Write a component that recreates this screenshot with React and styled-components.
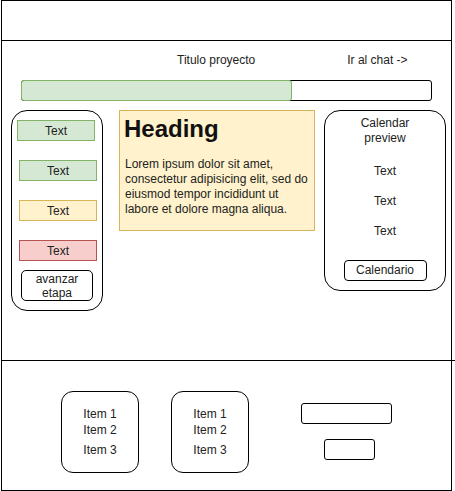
import React from "react";
import styled, { createGlobalStyle } from "styled-components";

const GlobalStyle = createGlobalStyle`
  html, body {
    margin: 0;
    padding: 0;
    background: #fff;
  }
  body {
    font-family: "Liberation Sans", Arial, Helvetica, sans-serif;
    font-size: 12px;
    color: #222;
  }
`;

const Frame = styled.div`
  width: 451px;
  height: 491px;
  margin-left: 1px;
  border: 1px solid #000;
  box-sizing: border-box;
  display: flex;
  flex-direction: column;
`;

const Header = styled.header`
  height: 40px;
  flex: none;
  box-sizing: border-box;
  border-bottom: 1px solid #000;
`;

const Main = styled.main`
  height: 320px;
  flex: none;
  box-sizing: border-box;
  padding: 0 9px;
  display: flex;
  flex-direction: column;
`;

const Divider = styled.div`
  height: 1px;
  flex: none;
  background: #000;
  margin-right: -5px;
  margin-top: -1px;
`;

const TopRow = styled.div`
  height: 39px;
  display: flex;
  align-items: center;
  line-height: 15px;
`;

const ProjectTitle = styled.span`
  margin-left: 166px;
`;

const ChatLink = styled.span`
  margin-left: 92px;
`;

const Progress = styled.div`
  margin: 0 10px;
  height: 21px;
  box-sizing: border-box;
  border: 1px solid #000;
  border-radius: 3px;
  display: flex;
`;

const ProgressFill = styled.div`
  margin: -1px;
  height: 21px;
  width: ${p => p.$width}px;
  box-sizing: border-box;
  background: #d5e8d4;
  border: 1px solid #82b366;
  border-radius: 3px;
`;

const PanelsRow = styled.div`
  margin-top: 9px;
  display: flex;
  align-items: flex-start;
  & > * {
    flex: none;
  }
`;

const SidePanel = styled.div`
  width: 92px;
  height: 201px;
  box-sizing: border-box;
  border: 1px solid #000;
  border-radius: 16px;
  padding-top: 9px;
  display: flex;
  flex-direction: column;
  align-items: flex-start;
`;

const palette = {
  green: ["#d5e8d4", "#82b366"],
  yellow: ["#fff2cc", "#d6b656"],
  red: ["#f8cecc", "#b85450"],
};

const StageBox = styled.div`
  width: 78px;
  height: 21px;
  box-sizing: border-box;
  margin-left: ${p => p.$offset}px;
  margin-bottom: 19px;
  background: ${p => palette[p.$tone][0]};
  border: 1px solid ${p => palette[p.$tone][1]};
  display: flex;
  align-items: center;
  justify-content: center;
  padding-top: 1px;
  line-height: 15px;
`;

const AdvanceButton = styled.div`
  width: 72px;
  height: 31px;
  box-sizing: border-box;
  margin-top: -10px;
  margin-left: 9px;
  border: 1px solid #000;
  border-radius: 5px;
  display: flex;
  align-items: center;
  justify-content: center;
  text-align: center;
  line-height: 14px;
`;

const NoteCard = styled.div`
  width: 196px;
  height: 121px;
  margin-left: 16px;
  box-sizing: border-box;
  background: #fff2cc;
  border: 1px solid #d6b656;
  padding: 4px 4px 0;
`;

const Heading = styled.h1`
  margin: 0;
  font-size: 24px;
  font-weight: bold;
  line-height: 28px;
  color: #111;
`;

const Paragraph = styled.p`
  margin: 14px 0 0 1px;
  font-size: 12px;
  line-height: 15px;
`;

const CalendarPanel = styled.div`
  width: 122px;
  height: 181px;
  margin-left: 9px;
  box-sizing: border-box;
  border: 1px solid #000;
  border-radius: 16px;
  padding-top: 5px;
  display: flex;
  flex-direction: column;
  align-items: center;
  text-align: center;
  line-height: 15px;
`;

const CalendarList = styled.div`
  margin-top: 18px;
  display: flex;
  flex-direction: column;
  gap: 15px;
`;

const CalendarButton = styled.div`
  margin-top: 21px;
  width: 83px;
  height: 21px;
  box-sizing: border-box;
  border: 1px solid #000;
  border-radius: 4px;
  display: flex;
  align-items: center;
  justify-content: center;
`;

const Footer = styled.footer`
  flex: 1;
  padding: 30px 0 0 59px;
  display: flex;
  align-items: flex-start;
`;

const ItemCard = styled.div`
  width: 78px;
  height: 82px;
  flex: none;
  box-sizing: border-box;
  margin-right: ${p => p.$gap}px;
  border: 1px solid #000;
  border-radius: 12px;
  padding-top: 14px;
  display: flex;
  flex-direction: column;
  align-items: center;
  line-height: 16px;
`;

const Item = styled.span`
  margin-top: ${p => (p.$spaced ? 4 : 0)}px;
`;

const InputStack = styled.div`
  padding-top: 12px;
  display: flex;
  flex-direction: column;
  align-items: flex-start;
  gap: 15px;
`;

const InputBox = styled.div`
  width: ${p => p.$width}px;
  height: 21px;
  box-sizing: border-box;
  margin-left: ${p => p.$offset || 0}px;
  border: 1px solid #000;
  border-radius: 3px;
`;

const stages = [
  { tone: "green", offset: 5 },
  { tone: "green", offset: 7 },
  { tone: "yellow", offset: 7 },
  { tone: "red", offset: 7 },
];

const ItemList = ({ gap }) => (
  <ItemCard $gap={gap}>
    <Item>Item 1</Item>
    <Item>Item 2</Item>
    <Item $spaced>Item 3</Item>
  </ItemCard>
);

export default function App() {
  return (
    <>
      <GlobalStyle />
      <Frame>
        <Header />
        <Main>
          <TopRow>
            <ProjectTitle>Titulo proyecto</ProjectTitle>
            <ChatLink>Ir al chat -&gt;</ChatLink>
          </TopRow>
          <Progress>
            <ProgressFill $width={271} />
          </Progress>
          <PanelsRow>
            <SidePanel>
              {stages.map((s, i) => (
                <StageBox key={i} $tone={s.tone} $offset={s.offset}>
                  Text
                </StageBox>
              ))}
              <AdvanceButton>
                avanzar
                <br />
                etapa
              </AdvanceButton>
            </SidePanel>
            <NoteCard>
              <Heading>Heading</Heading>
              <Paragraph>
                Lorem ipsum dolor sit amet,
                <br />
                consectetur adipisicing elit, sed do
                <br />
                eiusmod tempor incididunt ut
                <br />
                labore et dolore magna aliqua.
              </Paragraph>
            </NoteCard>
            <CalendarPanel>
              <div>
                Calendar
                <br />
                preview
              </div>
              <CalendarList>
                <span>Text</span>
                <span>Text</span>
                <span>Text</span>
              </CalendarList>
              <CalendarButton>Calendario</CalendarButton>
            </CalendarPanel>
          </PanelsRow>
        </Main>
        <Divider />
        <Footer>
          <ItemList gap={32} />
          <ItemList gap={52} />
          <InputStack>
            <InputBox $width={91} />
            <InputBox $width={51} $offset={23} />
          </InputStack>
        </Footer>
      </Frame>
    </>
  );
}
